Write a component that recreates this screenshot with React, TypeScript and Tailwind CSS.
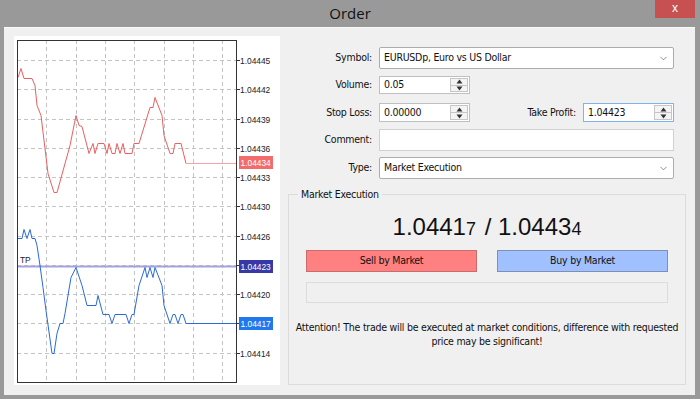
import { ChevronDown } from 'lucide-react';

const FONT = { fontFamily: '"DejaVu Sans Condensed", "Liberation Sans", Arial, sans-serif', fontStretch: 'condensed' };

const askPts: [number, number][] = [
  [18, 77], [21, 68], [24, 78], [32, 78], [35, 85], [37, 105], [41, 115], [48, 173], [54, 192], [57, 192],
  [70, 145], [76, 115], [79, 125], [82, 126], [89, 153], [93, 143], [95, 153], [98, 143], [104, 143],
  [107, 153], [109, 143], [112, 153], [115, 153], [117, 143], [120, 153], [123, 143], [125, 153],
  [132, 153], [134, 143], [139, 143], [150, 107], [153, 107], [155, 97], [162, 115], [164, 135],
  [170, 153], [173, 153], [175, 143], [181, 143], [186, 163],
];

const bidPts: [number, number][] = [
  [18, 238], [22, 238], [24, 229], [27, 238], [30, 229], [32, 238], [35, 238], [37, 245], [40, 265],
  [43, 287], [46, 310], [52, 353], [54, 353], [57, 333], [60, 323], [63, 323], [65, 313], [71, 277],
  [76, 267], [82, 285], [87, 305], [96, 305], [98, 295], [103, 314], [109, 314], [112, 323], [115, 314],
  [126, 314], [129, 323], [132, 314], [134, 314], [139, 285], [145, 267], [147, 277], [150, 267],
  [153, 277], [155, 267], [162, 285], [164, 305], [170, 323], [173, 314], [175, 314], [178, 323],
  [181, 314], [183, 314], [186, 323],
];

const levels = ['1.04445', '1.04442', '1.04439', '1.04436', '1.04433', '1.04430', '1.04426', '1.04423', '1.04420', '1.04417', '1.04414'];

function toPath(pts: [number, number][]) {
  return pts.map(([x, y], i) => `${i ? 'L' : 'M'}${x} ${y + 0.5}`).join(' ');
}

function Chart() {
  const vx = [0, 1, 2, 3, 4, 5, 6].map((i) => 46.3 + i * 29.33);
  return (
    <svg width="266" height="349" viewBox="14 36 266 349" className="block" style={{ fontFamily: '"Liberation Sans", Arial, sans-serif' }}>
      {vx.map((x) => (
        <line key={x} x1={Math.round(x) + 0.5} y1="40" x2={Math.round(x) + 0.5} y2="382" stroke="#c4c4c4" strokeDasharray="4 3" />
      ))}
      {levels.map((l, i) => {
        const y = Math.round(60 + i * 29.25) + 0.5;
        return (
          <g key={l}>
            <line x1="17" y1={y} x2="236" y2={y} stroke="#c4c4c4" strokeDasharray="4 3" />
            <line x1="236" y1={y} x2="240" y2={y} stroke="#333" />
            <text x="240" y={y + 3} fontSize="8.4" fill="#222">{l}</text>
          </g>
        );
      })}
      <line x1="17" y1="266.5" x2="236" y2="266.5" stroke="#a3a3e0" strokeWidth="2" />
      <text x="20" y="263" fontSize="8.4" fill="#222">TP</text>
      <path d={toPath(askPts)} fill="none" stroke="#ea5f5f" strokeWidth="1" />
      <line x1="186" y1="163.5" x2="236" y2="163.5" stroke="#f5a3a3" />
      <path d={toPath(bidPts)} fill="none" stroke="#2a6ad8" strokeWidth="1" />
      <line x1="186" y1="323.5" x2="236" y2="323.5" stroke="#2a6ad8" />
      <rect x="17.5" y="40.5" width="219" height="342" fill="none" stroke="#333" />
      <rect x="239" y="156" width="34" height="13" fill="#f26c6c" />
      <text x="240.5" y="165.5" fontSize="8.4" fill="#fff">1.04434</text>
      <rect x="239" y="260" width="34" height="13" fill="#3838a6" />
      <text x="240.5" y="269.5" fontSize="8.4" fill="#fff">1.04423</text>
      <rect x="239" y="317" width="34" height="13" fill="#1f78ee" />
      <text x="240.5" y="326.5" fontSize="8.4" fill="#fff">1.04417</text>
    </svg>
  );
}

function Spinner() {
  return (
    <div className="my-[1px] mr-[1px] flex w-[18px] flex-col border border-[#c6c6c6] bg-[#f4f4f4]">
      <div className="flex flex-1 items-center justify-center border-b border-[#c6c6c6]">
        <svg width="7" height="5" viewBox="0 0 7 5"><path d="M3.5 0.5L6.5 4.5H0.5Z" fill="#333" /></svg>
      </div>
      <div className="flex flex-1 items-center justify-center">
        <svg width="7" height="5" viewBox="0 0 7 5"><path d="M0.5 0.5H6.5L3.5 4.5Z" fill="#333" /></svg>
      </div>
    </div>
  );
}

function Row({ label, children, className }: { label: string; children: React.ReactNode; className: string }) {
  return (
    <div className={`flex items-center ${className}`}>
      <div className="w-[84px] text-right">{label}</div>
      <div className="ml-[7px] flex h-full items-stretch">{children}</div>
    </div>
  );
}

export default function App() {
  return (
    <div className="flex h-[399px] w-[700px] flex-col bg-[#999999] text-[10.5px] tracking-[-0.25px] text-[#111]" style={FONT}>
      <div className="relative flex h-[27px] items-center justify-center tracking-normal">
        <span className="text-[15px] text-[#111]" style={{ fontFamily: '"Open Sans", "Noto Sans", sans-serif', fontStretch: 'normal' }}>Order</span>
        <div className="absolute right-[5px] top-0 flex h-[18px] w-[40px] items-center justify-center bg-[#c75050] pb-[2px] text-[12px] text-white" style={{ fontFamily: '"Liberation Sans", sans-serif' }}>x</div>
      </div>
      <div className="mx-[4px] flex h-[368px] w-[691px] border-t border-[#fafafa] bg-[#f0f0f0]">
        <div className="ml-[10px] mt-[8px] h-[349px] w-[266px] bg-white tracking-normal">
          <Chart />
        </div>
        <div className="ml-[8px] flex w-[398px] flex-col">
          <Row label="Symbol:" className="mt-[19px] h-[22px]">
            <div className="flex w-[295px] items-center justify-between rounded-[2px] border border-[#acacac] bg-white pl-[4px] pr-[4px]">
              <span>EURUSDp, Euro vs US Dollar</span>
              <ChevronDown size={11} strokeWidth={1.3} color="#444" />
            </div>
          </Row>
          <Row label="Volume:" className="mt-[7px] h-[18px]">
            <div className="flex w-[91px] border border-[#c0c0c0] bg-white">
              <span className="flex flex-1 items-center pl-[4px]">0.05</span>
              <Spinner />
            </div>
          </Row>
          <div className="mt-[9px] flex h-[19px] items-center">
            <Row label="Stop Loss:" className="h-full">
              <div className="flex w-[91px] border border-[#c0c0c0] bg-white">
                <span className="flex flex-1 items-center pl-[4px]">0.00000</span>
                <Spinner />
              </div>
            </Row>
            <div className="ml-auto flex h-full items-center">
              <span>Take Profit:</span>
              <div className="ml-[7px] mr-[12px] flex h-full w-[91px] border border-[#7eb4ea] bg-white">
                <span className="flex flex-1 items-center pl-[4px]">1.04423</span>
                <Spinner />
              </div>
            </div>
          </div>
          <Row label="Comment:" className="mt-[7px] h-[22px]">
            <div className="w-[295px] border border-[#d0d0d0] bg-white" />
          </Row>
          <Row label="Type:" className="mt-[6px] h-[22px]">
            <div className="flex w-[295px] items-center justify-between rounded-[2px] border border-[#acacac] bg-white pl-[4px] pr-[4px]">
              <span>Market Execution</span>
              <ChevronDown size={11} strokeWidth={1.3} color="#444" />
            </div>
          </Row>
          <div className="relative mt-[15px] flex h-[191px] w-[398px] flex-col border border-[#dcdcdc] px-[17px]">
            <span className="absolute -top-[8px] left-[9px] bg-[#f0f0f0] px-[3px]">Market Execution</span>
            <div className="mt-[14px] flex h-[28px] items-baseline justify-center tracking-normal text-[#111]" style={{ fontFamily: '"Liberation Sans", Arial, sans-serif', fontStretch: 'normal' }}>
              <span className="text-[24px]">1.0441</span>
              <span className="text-[18px]">7</span>
              <span className="ml-[2px] text-[24px]">&nbsp;/ 1.0443</span>
              <span className="text-[18px]">4</span>
            </div>
            <div className="mt-[13px] flex h-[22px] justify-between">
              <div className="flex w-[171px] items-center justify-center border border-[#c86c6c] bg-[#ff8080]">Sell by Market</div>
              <div className="flex w-[171px] items-center justify-center border border-[#7f90b4] bg-[#a0c0ff]">Buy by Market</div>
            </div>
            <div className="mt-[10px] h-[21px] border border-[#dcdcdc]" />
            <p className="-mx-[12px] mt-[17px] text-center leading-[14px]">
              Attention! The trade will be executed at market conditions, difference with requested price may be significant!
            </p>
          </div>
        </div>
      </div>
    </div>
  );
}
